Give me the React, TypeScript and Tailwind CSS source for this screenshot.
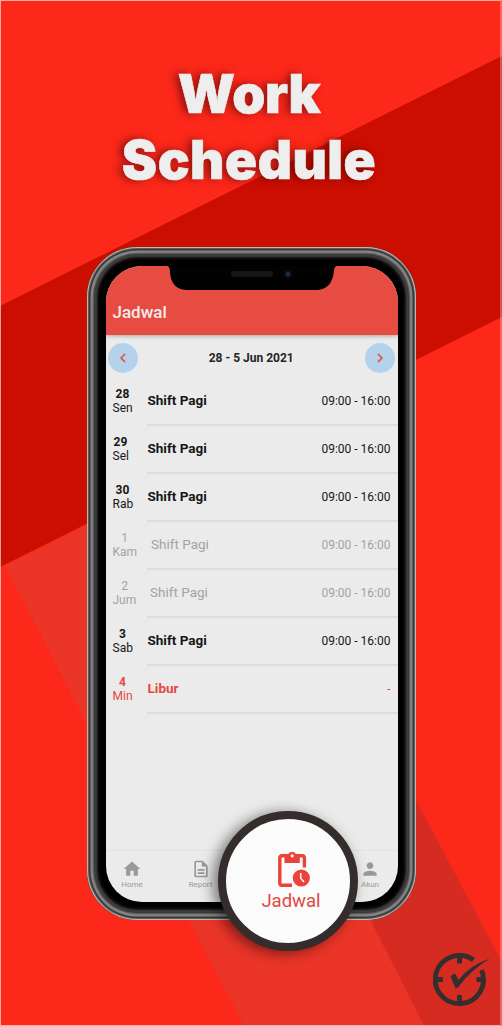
import React from 'react';
import { MdHome, MdPerson, MdOutlineDescription, MdChevronLeft, MdChevronRight } from 'react-icons/md';

type Tone = 'normal' | 'muted' | 'off';
type Shift = { date: string; day: string; name: string; time: string; tone: Tone; datePad: string; namePad: string };

const shifts: Shift[] = [
  { date: '28', day: 'Sen', name: 'Shift Pagi', time: '09:00 - 16:00', tone: 'normal', datePad: 'w-5', namePad: 'pl-[0.5px]' },
  { date: '29', day: 'Sel', name: 'Shift Pagi', time: '09:00 - 16:00', tone: 'normal', datePad: 'w-4', namePad: 'pl-[0.5px]' },
  { date: '30', day: 'Rab', name: 'Shift Pagi', time: '09:00 - 16:00', tone: 'normal', datePad: 'w-5', namePad: 'pl-[0.5px]' },
  { date: '1', day: 'Kam', name: 'Shift Pagi', time: '09:00 - 16:00', tone: 'muted', datePad: 'w-6', namePad: 'pl-1' },
  { date: '2', day: 'Jum', name: 'Shift Pagi', time: '09:00 - 16:00', tone: 'muted', datePad: 'w-6', namePad: 'pl-[3px]' },
  { date: '3', day: 'Sab', name: 'Shift Pagi', time: '09:00 - 16:00', tone: 'normal', datePad: 'w-5', namePad: 'pl-[0.5px]' },
  { date: '4', day: 'Min', name: 'Libur', time: '-', tone: 'off', datePad: 'w-5', namePad: 'pl-[0.5px]' },
];

const tones: Record<Tone, string> = {
  normal: 'text-[#161616]',
  muted: 'text-[#a3a3a3]',
  off: 'text-[#e5483f]',
};

function Backdrop() {
  return (
    <svg className="absolute inset-0 h-full w-full" viewBox="0 0 502 1026" preserveAspectRatio="none" aria-hidden="true">
      <rect width="502" height="1026" fill="#fc281a" />
      <path d="M5 566 L502 318 V1026 H244 Z" fill="#eb3529" />
      <path d="M415 318 H502 V962 L415 798 Z" fill="#fc281a" />
      <path d="M310 800 H416 L502 962 V1026 H424 Z" fill="#d62b20" />
      <path d="M0 306 L502 56 V317 L0 567 Z" fill="#cb0e00" />
      <rect x=".5" y=".5" width="500.5" height="1025" fill="none" stroke="#fff" strokeOpacity=".6" />
    </svg>
  );
}

function ShiftRow({ shift }: { shift: Shift }) {
  const weight = shift.tone === 'muted' ? 'font-normal' : 'font-bold';
  return (
    <li className={`flex h-12 ${tones[shift.tone]}`}>
      <div className="w-[41px] pl-[6.5px] pt-[10.5px] text-[12px] leading-[13.5px]">
        <div className={`${shift.datePad} ${weight} text-center`}>{shift.date}</div>
        <div>{shift.day}</div>
      </div>
      <div className="flex flex-1 items-center justify-between border-b-2 border-[#dddddd] pr-[7.5px]">
        <span className={`${shift.namePad} ${weight} text-[13.5px]`}>{shift.name}</span>
        <span className="pt-px text-[12px]">{shift.time}</span>
      </div>
    </li>
  );
}

function PhoneHeader() {
  return (
    <header className="relative h-[69px] bg-[#e74c42] pl-[6.5px] pt-9 shadow-[0_1px_4px_rgba(0,0,0,.3)]">
      <div className="text-[17px] font-medium leading-5 text-[#f1eded]">Jadwal</div>
      <svg className="absolute left-[57.5px] top-[-1px] h-7 w-[176px]" viewBox="0 0 176 28" aria-hidden="true">
        <path d="M0 0 H176 Q170 0 170 6 Q168 25 152 25 H24 Q7 25 6 7 Q6 0 0 0Z" fill="#020202" />
        <rect x="67" y="6" width="42" height="6" rx="3" fill="#161616" />
        <circle cx="124" cy="9" r="4" fill="#081018" />
        <circle cx="124" cy="9" r="2" fill="#17334e" />
      </svg>
    </header>
  );
}

function Phone() {
  return (
    <div className="relative h-[673px] w-[329px] rounded-[50px] bg-black pb-[18px] pl-[19.5px] pr-[17.5px] pt-[19px] shadow-[inset_0_0_1px_1px_#c8c2c0,inset_0_0_1px_2px_#555,inset_0_0_1px_3.5px_#333,inset_0_0_1px_5.5px_#8c8c8c,inset_0_0_2px_7px_#6a6a6a,inset_0_0_1px_8px_#262626,inset_0_0_2px_10px_#444,inset_0_0_3px_12px_#111]">
      <div className="flex h-full flex-col overflow-hidden rounded-[36px] bg-[#ebebeb]">
        <PhoneHeader />
        <div className="flex h-[42px] items-center justify-between pl-[1.5px] pr-[3px] pt-1">
          <button className="flex size-[30px] items-center justify-center rounded-full bg-[#b5d2ed] text-[#e5483f]" aria-label="Previous week">
            <MdChevronLeft className="size-[18px]" />
          </button>
          <span className="text-[12px] font-bold text-[#252525]">28 - 5 Jun 2021</span>
          <button className="flex size-[30px] items-center justify-center rounded-full bg-[#b5d2ed] text-[#e5483f]" aria-label="Next week">
            <MdChevronRight className="size-[18px]" />
          </button>
        </div>
        <ul className="pt-[0.6px]">
          {shifts.map((s) => (
            <ShiftRow key={s.date} shift={s} />
          ))}
        </ul>
        <nav className="mt-auto flex h-[52px] items-start justify-between border-t border-[#e2e2e2] pl-2.5 pr-3 pt-2 text-[#999]">
          <div className="flex w-8 flex-col items-center">
            <MdHome className="size-5" />
            <span className="text-[8px] leading-[11px]">Home</span>
          </div>
          <div className="mr-[101px] flex w-8 flex-col items-center">
            <MdOutlineDescription className="size-5" />
            <span className="text-[8px] leading-[11px]">Report</span>
          </div>
          <div className="flex w-8 flex-col items-center">
            <MdPerson className="size-5" />
            <span className="text-[8px] leading-[11px]">Akun</span>
          </div>
        </nav>
      </div>
    </div>
  );
}

function Magnifier() {
  return (
    <div className="absolute left-[218px] top-[811px] flex size-[140px] flex-col items-center rounded-full border-8 border-[#352c2c] bg-[#fbfbfb] pt-8 shadow-[-5px_2px_14px_rgba(0,0,0,.5)]">
      <svg className="ml-3 h-9 w-8" viewBox="0 0 32 36" aria-hidden="true">
        <path d="M14 34.2H4Q1.800 34.2 1.800 32V7Q1.800 4.800 4 4.800H24.2Q26.4 4.800 26.4 7V16.5" fill="none" stroke="#ea4338" strokeWidth="3.4" />
        <path d="M6.5 3.500H10A4.5 4.5 0 0 1 18.3 3.500H21.800V12H6.500Z" fill="#ea4338" />
        <circle cx="14.2" cy="4.800" r="1.600" fill="#fbfbfb" />
        <circle cx="23.3" cy="27" r="8.6" fill="#ea4338" />
        <path d="M22.7 22V27.3L26 31" fill="none" stroke="#fff" strokeWidth="1.5" />
      </svg>
      <span className="ml-1.5 mt-0.5 text-[18.5px] leading-6 text-[#df4a44]">Jadwal</span>
    </div>
  );
}

function BrandMark() {
  return (
    <svg className="absolute left-[433px] top-[953px] h-[56px] w-[60px]" viewBox="0 0 60 56" aria-hidden="true">
      <path d="M40.5 7A24.1 24.1 0 1 0 48.5 17" fill="none" stroke="#352e2e" strokeWidth="4.8" />
      <path d="M24 3H29V10.500H24ZM24 42H29V50H24ZM2 24H10V29H2ZM43.500 24H50V29H43.500Z" fill="#352e2e" />
      <path d="M17.500 23L22 20.500L25.500 27Q37 12 57 5.500Q38 16.500 25 34.500L22.500 35.500Z" fill="#352e2e" />
    </svg>
  );
}

export default function App() {
  return (
    <main className="relative flex h-[1026px] w-[502px] flex-col items-center overflow-hidden bg-white font-['Roboto',sans-serif]">
      <Backdrop />
      <h1 className="relative mt-[61px] flex h-[186px] flex-col items-center pr-1 font-['Inter',sans-serif] text-[53px] font-black leading-[66px] text-[#eee] [-webkit-text-stroke:0.6px_#eee] [text-shadow:-4px_0_8px_rgba(60,0,0,.6)]">
        <span className="tracking-[-0.3px]">Work</span>
        <span className="tracking-[0.5px]">Schedule</span>
      </h1>
      <Phone />
      <Magnifier />
      <BrandMark />
    </main>
  );
}
